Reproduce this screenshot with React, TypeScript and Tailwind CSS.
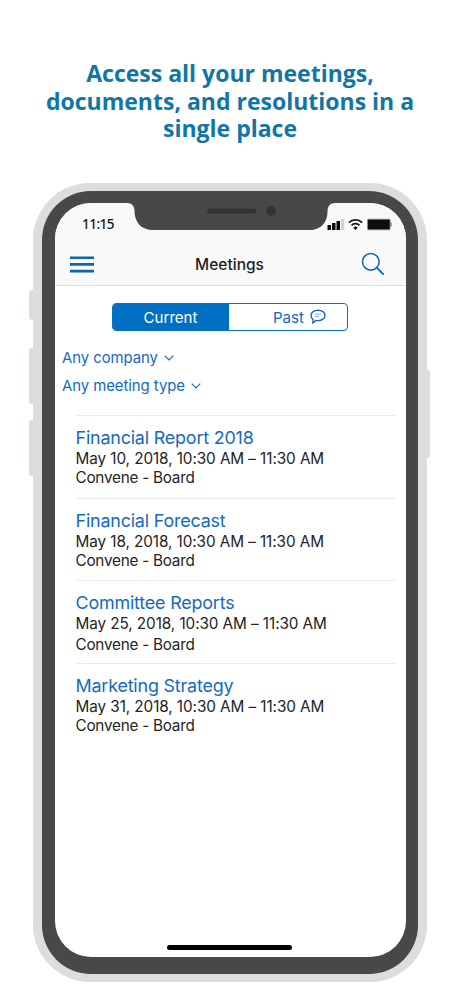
import clsx from "clsx"

const meetings = [
  { title: "Financial Report 2018", time: "May 10, 2018, 10:30 AM – 11:30 AM", group: "Convene - Board" },
  { title: "Financial Forecast", time: "May 18, 2018, 10:30 AM – 11:30 AM", group: "Convene - Board" },
  { title: "Committee Reports", time: "May 25, 2018, 10:30 AM – 11:30 AM", group: "Convene - Board" },
  { title: "Marketing Strategy", time: "May 31, 2018, 10:30 AM – 11:30 AM", group: "Convene - Board" },
]

function Notch() {
  return (
    <svg className="absolute left-[72px] top-[-1px]" width="210" height="28" viewBox="0 0 210 28" aria-hidden>
      <path d="M0 0V1C5 1 7.500 4 7.500 9C7.500 20 14 28 26 28H183C194 28 200.500 20 200.500 10C200.500 4 203 1 208.500 1V0Z" fill="#484848" />
      <rect x="80" y="6.500" width="49.500" height="5" rx="2.500" fill="#333" />
      <circle cx="144" cy="9" r="5" fill="#333" />
    </svg>
  )
}

function StatusIcons() {
  return (
    <svg width="66" height="13" viewBox="0 0 66 13" aria-hidden>
      <rect x="0.500" y="7" width="3.500" height="5" fill="#0a0a0a" />
      <rect x="5" y="5" width="3.500" height="7" fill="#0a0a0a" />
      <rect x="9.500" y="3" width="3.500" height="9" fill="#0a0a0a" />
      <rect x="14" y="1" width="3.300" height="11" fill="#d2d2d2" />
      <g fill="none" stroke="#111" strokeWidth="1.700">
        <path d="M21.900 4.700a9.300 9.300 0 0 1 13.200 0" />
        <path d="M24.500 7.400a5.600 5.600 0 0 1 8 0" />
      </g>
      <path d="M28.500 12l-2.200-2.300a3.100 3.100 0 0 1 4.400 0z" fill="#111" />
      <rect x="40.500" y="1.200" width="22.600" height="10.600" rx="1" fill="#0d0d0d" stroke="#8b8b8b" strokeWidth="0.800" />
      <path d="M63.500 4.500h1v4h-1z" fill="#555" />
    </svg>
  )
}

function Chevron() {
  return (
    <svg width="10" height="6" viewBox="0 0 10 6" fill="none" stroke="#1a69bd" strokeWidth="1.200" aria-hidden>
      <path d="M0.700 0.600L5 4.900L9.300 0.600" />
    </svg>
  )
}

function ChatIcon() {
  return (
    <svg width="16" height="16" viewBox="0 0 16 16" fill="none" aria-hidden>
      <path
        d="M8 1.200c4 0 7 2.200 7 5.200s-3 5.200-7 5.200c-.8 0-1.500-.1-2.200-.2-.8 1.200-1.800 2-3.300 2.600.6-1 .8-2.300.5-3.600C1.700 9.400 1 8 1 6.400c0-3 3-5.200 7-5.200z"
        stroke="#1767bb"
        strokeWidth="1.400"
        strokeLinejoin="round"
      />
      <path d="M4.800 5.300h6.300M4.800 7.500h4.200" stroke="#8c9fe0" strokeWidth="0.900" />
    </svg>
  )
}

function Filter({ label }: { label: string }) {
  return (
    <button className="flex h-[28px] items-center gap-[6px] text-[14.900px] tracking-[-0.050px] text-[#1569c0]">
      <span>{label}</span>
      <Chevron />
    </button>
  )
}

export default function App() {
  return (
    <div className="flex h-[996px] w-[460px] flex-col items-center overflow-hidden bg-white font-['Inter',sans-serif]">
      <h1 className="h-[183px] w-full pt-[60px] text-center font-['Open_Sans',sans-serif] text-[23px] font-bold leading-[27.500px] text-[#0f76a6]">
        Access all your meetings,
        <br />
        documents, and resolutions in a
        <br />
        single place
      </h1>

      <div className="relative h-[799px] w-[394px] rounded-[57px] bg-[#dcdddd] px-[9px] pb-[8px] pt-[8px]">
        {/* side buttons */}
        <div className="absolute left-[-4px] top-[107px] h-[30px] w-[4px] rounded-l-[3px] bg-[#dadddd]" />
        <div className="absolute left-[-4px] top-[165px] h-[56px] w-[4px] rounded-l-[3px] bg-[#dadddd]" />
        <div className="absolute left-[-4px] top-[237px] h-[56px] w-[4px] rounded-l-[3px] bg-[#dadddd]" />
        <div className="absolute right-[-3px] top-[187px] h-[88px] w-[3px] rounded-r-[2px] bg-[#dadddd]" />

        <div className="h-[783px] w-[376px] rounded-[49px] bg-[#484848] pb-[17px] pl-[13px] pr-[12px] pt-[12px]">
          <div className="relative flex h-[754px] w-[351px] flex-col rounded-[36px] bg-white">
            <Notch />
            <header className="h-[83px] rounded-t-[36px] border-b border-[#dedede] bg-[#f9f9f9]">
              <div className="flex h-[42px] items-center justify-between pl-[27px] pr-[13px] pt-px">
                <span className="font-['Noto_Sans',sans-serif] text-[13.500px] font-medium tracking-[-0.500px] text-[#151515]">11:15</span>
                <StatusIcons />
              </div>
              <div className="flex h-[38px] items-center justify-between pl-[15px] pr-[21px]">
                <svg width="24" height="17" viewBox="0 0 24 17" aria-hidden>
                  <path d="M0 1.700h24M0 8.400h24M0 15.100h24" stroke="#0d63b5" strokeWidth="2.600" />
                </svg>
                <span className="ml-[4px] pt-[2px] text-[15.500px] font-[450] text-[#1f1f1f]">Meetings</span>
                <svg width="24" height="24" viewBox="0 0 24 24" fill="none" stroke="#1767bb" aria-hidden>
                  <circle cx="9.800" cy="9.800" r="8.300" strokeWidth="1.600" />
                  <path d="M15.700 15.700l7 7" strokeWidth="1.900" />
                </svg>
              </div>
            </header>

            <div className="ml-[57px] mt-[17px] flex h-[28px] w-[236px] overflow-hidden rounded-[4px] border border-[#0c70c2] text-[15.100px]">
              <button className="w-[116px] bg-[#0070c5] pr-px pt-[2px] text-white">Current</button>
              <button className="flex flex-1 items-center justify-center gap-[6px] pl-[23px] text-[#1569c0]">
                <span className="pt-[2px]">Past</span>
                <ChatIcon />
              </button>
            </div>

            <div className="ml-[7px] mt-[13px]">
              <Filter label="Any company" />
              <Filter label="Any meeting type" />
            </div>

            <ul className="ml-[20.500px] mr-[10px] mt-[15px]">
              {meetings.map((m, i) => (
                <li key={m.title} className="h-[82.600px] border-t border-[#ebebeb] pt-[11px]">
                  <h2 className="text-[17.900px] leading-[22px] tracking-[-0.180px] text-[#1569c0]">{m.title}</h2>
                  <p className="whitespace-nowrap text-[15.300px] leading-[19px] tracking-[-0.080px] text-[#242424]">{m.time}</p>
                  <p className={clsx("text-[15.300px] leading-[20px] tracking-[-0.250px] text-[#242424]", i === 2 && "pt-[2px]")}>
                    {m.group}
                  </p>
                </li>
              ))}
            </ul>

            <div className="absolute bottom-[7px] left-[112px] h-[5px] w-[125px] rounded-full bg-black" />
          </div>
        </div>
      </div>
    </div>
  )
}
